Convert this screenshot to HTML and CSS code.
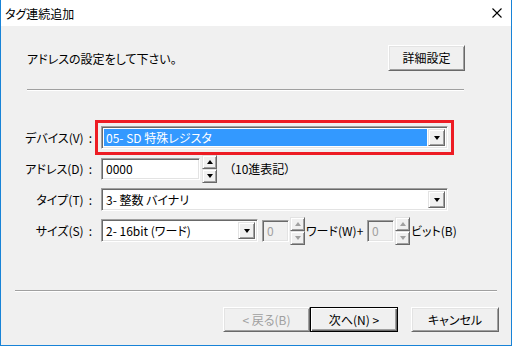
FILE: index.html
```html
<!DOCTYPE html>
<html lang="ja">
<head>
    <meta charset="UTF-8">
    <title>タグ連続追加</title>
    <link rel="stylesheet" href="styles.css">
</head>
<body>
    <div class="window">
        <div class="titlebar">
            <span class="title">タグ連続追加</span>
            <span class="close">
                <svg width="10" height="10" viewBox="0 0 10 10"><path d="M0.5 0.5 L9.5 9.5 M9.5 0.5 L0.5 9.5" stroke="#000" stroke-width="1.1" fill="none"/></svg>
            </span>
        </div>

        <div class="dialog">
            <div class="intro">
                <span>アドレスの設定をして下さい。</span>
                <button class="btn btn-detail">詳細設定</button>
            </div>
            <div class="rule top-rule"></div>

            <div class="form">
                <div class="row">
                    <span class="label">デバイス(V)<span class="colon">:</span></span>
                    <div class="combo combo-wide highlighted">
                        <span class="combo-text selected">05- SD 特殊レジスタ</span>
                        <span class="drop"><i class="arrow down"></i></span>
                    </div>
                </div>
                <div class="row">
                    <span class="label">アドレス(D)<span class="colon">:</span></span>
                    <div class="field field-address">0000</div>
                    <div class="spin">
                        <span class="spin-btn"><i class="arrow up"></i></span>
                        <span class="spin-btn"><i class="arrow down"></i></span>
                    </div>
                    <span class="hint">（10進表記）</span>
                </div>
                <div class="row">
                    <span class="label">タイプ(T)<span class="colon">:</span></span>
                    <div class="combo combo-wide">
                        <span class="combo-text">3- 整数 バイナリ</span>
                        <span class="drop"><i class="arrow down"></i></span>
                    </div>
                </div>
                <div class="row">
                    <span class="label">サイズ(S)<span class="colon">:</span></span>
                    <div class="combo combo-size">
                        <span class="combo-text">2- 16bit (ワード)</span>
                        <span class="drop"><i class="arrow down"></i></span>
                    </div>
                    <div class="field field-small disabled">0</div>
                    <div class="spin disabled">
                        <span class="spin-btn"><i class="arrow up"></i></span>
                        <span class="spin-btn"><i class="arrow down"></i></span>
                    </div>
                    <span class="unit unit-word">ワード(W)+</span>
                    <div class="field field-small disabled">0</div>
                    <div class="spin disabled">
                        <span class="spin-btn"><i class="arrow up"></i></span>
                        <span class="spin-btn"><i class="arrow down"></i></span>
                    </div>
                    <span class="unit">ビット(B)</span>
                </div>
            </div>

            <div class="rule bottom-rule"></div>
            <div class="actions">
                <button class="btn btn-action disabled">&lt; 戻る(B)</button>
                <button class="btn btn-action default">次へ(N) &gt;</button>
                <button class="btn btn-action cancel">キャンセル</button>
            </div>
        </div>
    </div>
</body>
</html>
```

FILE: styles.css
```css
* {
    box-sizing: border-box;
}
body {
    margin: 0;
    background: #fff;
    color: #000;
    font-family: "Noto Sans CJK JP", "Noto Sans", sans-serif;
    font-size: 12px;
    font-feature-settings: "palt";
}
.window {
    width: 512px;
    height: 346px;
    border: 1px solid #1883d7;
    border-top: none;
    display: flex;
    flex-direction: column;
    background: #f0f0f0;
}
.titlebar {
    height: 26px;
    flex: none;
    display: flex;
    align-items: center;
    padding: 0 9px 0 4px;
    background: #fff;
}
.title {
    font-size: 12px;
}
.close {
    margin-left: auto;
    display: flex;
}
.dialog {
    flex: 1;
    display: flex;
    flex-direction: column;
    padding: 19px 0 13px;
}
.intro {
    height: 26px;
    display: flex;
    align-items: center;
    justify-content: space-between;
    padding: 0 46px 0 26px;
}
.rule {
    height: 2px;
    border-top: 1px solid #a0a0a0;
    border-bottom: 1px solid #fff;
}
.top-rule {
    margin: 18px 47px 0 26px;
}
.bottom-rule {
    margin: auto 14px 0 14px;
}

/* buttons */
.btn {
    font: inherit;
    color: #000;
    background: #f0f0f0;
    border: 1px solid;
    border-color: #fff #696969 #696969 #fff;
    box-shadow: inset 1px 1px #e3e3e3, inset -1px -1px #a0a0a0;
    padding: 0;
    line-height: 1;
}
.btn-detail {
    width: 77px;
    height: 26px;
}
.actions {
    display: flex;
    justify-content: flex-end;
    margin-top: 15px;
    padding-right: 12px;
}
.btn-action {
    width: 88px;
    height: 25px;
}
.btn-action.disabled {
    width: 87px;
    color: #a0a0a0;
}
.btn-action.default {
    border: 1px solid #000;
    box-shadow: inset 1px 1px #fff, inset -1px -1px #696969, inset -2px -2px #a0a0a0;
}
.btn-action.cancel {
    margin-left: 13px;
}

/* form */
.form {
    margin-top: 31px;
}
.row {
    height: 31px;
    display: flex;
    align-items: center;
}
.label {
    width: 72px;
    margin-left: 19px;
    margin-right: 9px;
    text-align: right;
    white-space: nowrap;
}
.colon {
    margin-left: 5px;
}
.combo {
    height: 23px;
    display: flex;
    background: #fff;
    border: 1px solid;
    border-color: #a0a0a0 #fff #fff #a0a0a0;
    box-shadow: inset 1px 1px #696969, inset -1px -1px #e3e3e3;
    padding: 2px;
}
.combo-wide {
    width: 347px;
}
.combo-size {
    width: 157px;
}
.highlighted {
    outline: 3px solid #ed1c24;
    outline-offset: 3px;
}
.combo-text {
    flex: 1;
    display: flex;
    align-items: center;
    padding-left: 2px;
    white-space: nowrap;
}
.combo-text.selected {
    background: #3399ff;
    color: #fff;
    margin-right: 1px;
}
.drop {
    width: 17px;
    display: flex;
    align-items: center;
    justify-content: center;
    background: #f0f0f0;
    border: 1px solid;
    border-color: #e3e3e3 #696969 #696969 #e3e3e3;
    box-shadow: inset 1px 1px #fff, inset -1px -1px #a0a0a0;
}
.arrow {
    width: 1px;
    height: 0;
    border-left: 3px solid transparent;
    border-right: 3px solid transparent;
}
.arrow.down {
    border-top: 4px solid #000;
}
.arrow.up {
    border-bottom: 4px solid #000;
}
.field {
    height: 22px;
    display: flex;
    align-items: center;
    padding-left: 4px;
    background: #fff;
    border: 1px solid;
    border-color: #a0a0a0 #fff #fff #a0a0a0;
    box-shadow: inset 1px 1px #696969, inset -1px -1px #e3e3e3;
}
.field-address {
    width: 99px;
}
.field-small {
    width: 27px;
    margin-left: 4px;
}
.field.disabled {
    background: #f0f0f0;
    color: #a0a0a0;
}
.spin {
    width: 15px;
    height: 28px;
    margin-left: 2px;
    display: flex;
    flex-direction: column;
}
.spin-btn {
    flex: 1;
    display: flex;
    align-items: center;
    justify-content: center;
    background: #f0f0f0;
    border: 1px solid;
    border-color: #e3e3e3 #696969 #696969 #e3e3e3;
    box-shadow: inset 1px 1px #fff, inset -1px -1px #a0a0a0;
}
.spin.disabled .arrow.up {
    border-bottom-color: #a0a0a0;
}
.spin.disabled .arrow.down {
    border-top-color: #a0a0a0;
}
.row .spin.disabled {
    margin-left: 1px;
}
.hint {
    margin-left: 12px;
}
.unit {
    margin-left: 1px;
    white-space: nowrap;
}
.unit-word {
    width: 57px;
}
```
